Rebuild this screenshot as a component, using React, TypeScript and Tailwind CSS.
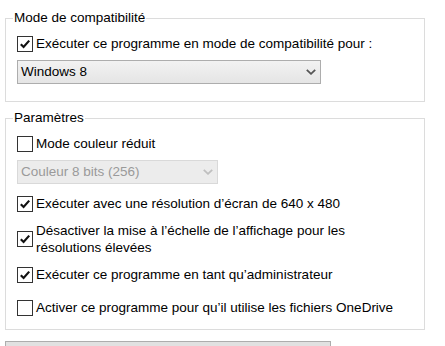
import React from 'react'

function Check({ checked }: { checked?: boolean }) {
  return (
    <div className="w-4 h-4 shrink-0 border border-[#333333] bg-white flex items-center justify-center">
      {checked && (
        <svg width="12" height="12" viewBox="0 0 12 12">
          <path d="M1.8 6.2 L4.6 9 L10.2 2.6" fill="none" stroke="#111" strokeWidth="2.2" />
        </svg>
      )}
    </div>
  )
}

function Chevron({ color }: { color: string }) {
  return (
    <svg width="10" height="6" viewBox="0 0 10 6">
      <path d="M0.8 0.8 L5 4.8 L9.2 0.8" fill="none" stroke={color} strokeWidth="1.8" />
    </svg>
  )
}

function Row({ checked, children, className = '' }: { checked?: boolean; children: React.ReactNode; className?: string }) {
  return (
    <div className={`flex items-center gap-[3px] ${className}`}>
      <Check checked={checked} />
      <span className="leading-[17px]">{children}</span>
    </div>
  )
}

export default function App() {
  return (
    <div
      className="w-[445px] h-[346px] overflow-hidden bg-white text-[13.5px] text-black pt-[11px] px-[5px]"
      style={{ fontFamily: '"Liberation Sans", Arial, sans-serif' }}
    >
      {/* Mode de compatibilité */}
      <fieldset className="w-[420px] border border-[#dcdcdc] px-[11px] pb-[17px]">
        <legend className="-ml-[4px] px-px leading-[14px]">Mode de compatibilité</legend>
        <Row checked className="mt-[10px]">
          Exécuter ce programme en mode de compatibilité pour :
        </Row>
        <div className="mt-[8px] w-[304px] h-[24px] border border-[#adadad] bg-gradient-to-b from-[#f2f2f2] to-[#e5e5e5] flex items-center justify-between pl-[3px] pr-[4px]">
          <span>Windows 8</span>
          <Chevron color="#555555" />
        </div>
      </fieldset>

      {/* Paramètres */}
      <fieldset className="mt-[9px] w-[420px] border border-[#dcdcdc] px-[11px] pb-[13px]">
        <legend className="-ml-[4px] px-px leading-[14px]">Paramètres</legend>
        <Row className="mt-[10px]">Mode couleur réduit</Row>
        <div className="mt-[8px] w-[201px] h-[24px] border border-[#d9d9d9] bg-[#ececec] flex items-center justify-between pl-[3px] pr-[4px] text-[#9a9a9a]">
          <span>Couleur 8 bits (256)</span>
          <Chevron color="#bfbfbf" />
        </div>
        <Row checked className="mt-[11px]">
          Exécuter avec une résolution d’écran de 640 x 480
        </Row>
        <Row checked className="mt-[10px]">
          Désactiver la mise à l’échelle de l’affichage pour les
          <br />
          résolutions élevées
        </Row>
        <Row checked className="mt-[10px]">
          Exécuter ce programme en tant qu’administrateur
        </Row>
        <Row className="mt-[16px]">Activer ce programme pour qu’il utilise les fichiers OneDrive</Row>
      </fieldset>

      <div className="mt-[11px] w-[326px] h-[24px] border border-[#adadad] bg-[#e1e1e1]" />
    </div>
  )
}
